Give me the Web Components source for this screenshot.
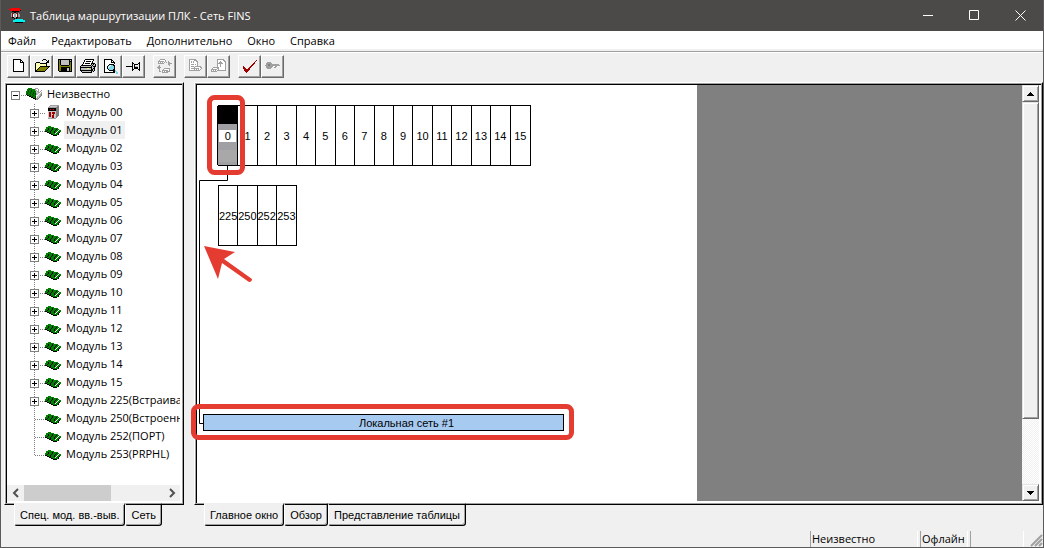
<!DOCTYPE html>
<html lang="ru">
<head>
<meta charset="utf-8">
<title>Таблица маршрутизации ПЛК - Сеть FINS</title>
<style>
  html, body { margin: 0; height: 100%; }
  body { font: 11px/18px "Open Sans", "Noto Sans", sans-serif; color: #000; background: #f0f0f0; }
</style>
</head>
<body>
<app-window></app-window>
<script>
const define = (name, html, setup) => {
  const template = document.createElement('template');
  template.innerHTML = html;
  customElements.define(name, class extends HTMLElement {
    connectedCallback() {
      if (this.shadowRoot) return;
      this.attachShadow({ mode: 'open' }).append(template.content.cloneNode(true));
      if (setup) setup(this, this.shadowRoot);
    }
  });
};

/* Pixel icons: one character for each pixel */
const PALETTE = { '#': '#000', O: '#808000', W: '#fff', Y: '#ffff66', L: '#c0c0c0', G: '#a0a0a0', D: '#808080', C: '#7ed6e6', R: '#a00000', E: '#f00', B: '#00f0f0', g: '#008000', K: '#003c00', M: '#c8c8c8' };
const ICONS = {
  app: ['..EEEEEEEEE.....','EEEEEEEEEEEE....','.EEEEEEEEEE#....','...#######......','.....##.........','..GR.GG.RG......','..GRWGGWRGG.....','..GRWBGWRGG.....','..GRWGGWRGG.....','...##GG##.......','.....#.#........','......BBBBBBBB..','....BBBBBBBBBBBB','....BBBBBBBBBBBB','......########..'],
  new: ['..########......','..#WWWWWW##.....','..#WWWWWW#W#....','..#WWWWWW####...','..#WWWWWWWWW#...','..#WWWWWWWWW#...','..#WWWWWWWWW#...','..#WWWWWWWWW#...','..#WWWWWWWWW#...','..#WWWWWWWWW#...','..#WWWWWWWWW#...','..#WWWWWWWWW#...','..###########...'],
  open: ['.........###....','........#...#.#.','.............##.','..####......###.','.#YWYW#######...','.#WYWYWYWYWY#...','.#YWYWYWYWYW#...','.#WYWY##########','.#YWY#OOOOOOOO#.','.#WY#OOOOOOOO#..','.#Y#OOOOOOOO#...','.##OOOOOOOO#....','.##########.....'],
  save: ['.##############.','.#O#LLLLLLLL#L#.','.#O#LLLLLLLL###.','.#O#LLLLLLLL#O#.','.#O#LLLLLLLL#O#.','.#O#LLLLLLLL#O#.','.#OO########OO#.','.#OOOOOOOOOOOO#.','.#OO#########O#.','.#OO######LL#O#.','.#OO######LL#O#.','.#OO######LL#O#.','..#############.'],
  print: ['.....#########..','....#WWWWWWWW#..','....#W#####W#...','...#WWWWWWWW#...','...#W#####W####.','..#WWWWWWWW#L#L#','.##########L#LL#','#LLLLLLLLLL#L###','############LL#.','#LLLLLLYYLL#L##.','#LLLLLLLLLL##L#.','#############L#.','.#LLLLLLLLL#L#..','..##########....'],
  preview: ['.########.......','.#WWWWWW##......','.#WWWWWW#W#.....','.#WWWWWW####....','.#WWWWWWWWW#....','.#WWWW#####.....','.#WWW#CWCC##....','.#WW#CWCCCC#....','.#WW#WCCCCC#....','.#WW#CCCCCC#....','.#WWW#CCCC##....','.#WWWW######C...','.#WWWWWWWW##CC..','.###########.CC.','.............CC.'],
  pin: ['................','................','................','......#......#..','......##....##..','......#.####.#..','......#.#WWW.#..','#######.#LLL.#..','......#.####.#..','......#.####.#..','......##....##..','......#......#..'],
  swap: ['...GGGGG........','..GWWWWWG.......','.GGGGGGWG..G....','.GWGWGWG.G.GG...','.GGGGGG....GGGG.','...........GG...','..G.........G...','.GG.............','GGGG............','.GG....GGGGGG...','..G...GWWWWWG...','..G..GGGGGGWG...','..GG.GWGWGGGG...','.....GGGGGG.....'],
  down: ['.GGGGGGG........','.GWWWWGGG.......','.GWGWGWWGG......','.GWGWGWWWG......','.GWWWWWWWG......','.GWGGGWGWG......','.GWWWWWWWG......','.GWGGG.GGGGGG...','.GWWW.GWWWWWGG..','.GWGGGGGGGGWWG..','.GWWWWGWGWGWG...','.GGGGGGGGGGG....'],
  up: ['......GGGGGGG...','......GWWWWWGG..','......GWWGWWWGG.','......GWGGGWWWG.','......GGGGGGWWG.','......GWWGWWWWG.','......GWWGWWWWG.','......GWWGWWWWG.','..GGGGGGWWWWWWG.','.GWWWWGGWWWWWWG.','GGGGGGWGWWWWWWG.','GWGWGWGGGGGGGGG.','GGGGGG..........'],
  check: ['................','..............R.','.............R..','............R...','...........RR...','..........RR....','.........RR.....','.R......RR......','.RR....RR.......','.RRR..RR........','..RRRRRR........','..RRRRR.........','...RRR..........','....R...........'],
  key: ['................','................','................','..GGGG..........','.GGGGGG.........','.GGDDGGGGGGGGG..','GGGDDGGGGGGGGGG.','.GGGGGGGWWGGWW..','.GGGGGG..GG.....','..GGGG..........'],
  unit: ['................','................','..gggg...GGG....','.ggKgggggGWWG...','.gKggKgggGGWG..G','ggKggKggKgMGG.GW','gKggKggKggMMGGWG','gKggKggKgKGMMWMG','KggKggKggKGMWMGD','.##gKggKggWWMMGD','...##gKggKWMMGD.','.....##ggKWGMD..','.......##KGGD...','.........#GD....'],
  cpu: ['................','.....GGGGGGGGG..','....GMMMMMMMDD..','...GGGGGGGGDDD..','...########DDD..','...##E##E##DDD..','...########DDD..','...MMMMMMMMDDD..','...MRRMRRRMDDD..','...MRRMRRRMDDD..','...MRRMMRMMDDD..','...MRRMRRMMDDD..','...MRRMRRMMDD...','...MMMMRRMMD....','...GGGGGGGG.....'],
  board: ['................','................','................','................','...ggg..........','.gggggggg.......','.gg#ggg#ggggg...','ggg#ggg#ggg#gg..','gg#ggg#ggg#ggWgg','##ggg#ggg#ggWggg','..##g#ggg#gWgg#W','....##ggggWgg#W.','......##ggggg#..','........####....']
};
customElements.define('pixel-icon', class extends HTMLElement {
  connectedCallback() {
    if (this.shadowRoot) return;
    let rects = '';
    ICONS[this.getAttribute('name')].forEach((row, y) => {
      for (let x = 0; x < row.length; x++) {
        if (row[x] === '.') continue;
        let end = x;
        while (row[end + 1] === row[x]) end++;
        rects += `<rect x="${x}" y="${y}" width="${end - x + 1}" height="1" fill="${PALETTE[row[x]]}"/>`;
        x = end;
      }
    });
    this.attachShadow({ mode: 'open' }).innerHTML =
      `<style>:host{display:block;width:16px;height:16px;flex:none}svg{display:block}</style>
       <svg width="16" height="16" viewBox="0 0 16 16" shape-rendering="crispEdges" aria-hidden="true">${rects}</svg>`;
  }
});

define('title-bar', `
<style>
  :host { display: flex; align-items: center; height: 31px; flex: none; background: #4c4a48; color: #fff; padding-left: 8px; }
  h1 { flex: 1; margin: 0 0 0 5px; font-size: 11px; font-weight: 400; }
  button { width: 46px; height: 31px; padding: 0; border: 0; background: none; display: grid; place-items: center; }
  svg { display: block; fill: none; stroke: #fff; }
</style>
<pixel-icon name="app"></pixel-icon>
<h1><slot></slot></h1>
<button aria-label="Свернуть"><svg width="11" height="11"><path d="M0 5.5h10"/></svg></button>
<button aria-label="Развернуть"><svg width="11" height="11"><path d="M.5.5h9v9h-9z"/></svg></button>
<button aria-label="Закрыть"><svg width="11" height="11"><path d="M.5.5l10 10M10.500.5l-10 10"/></svg></button>`);

define('menu-bar', `
<style>
  :host { display: flex; gap: 15px; height: 18px; flex: none; padding: 0 7px; background: #fff; border-bottom: 2px solid #f0f0f0; }
</style><slot></slot>`);
define('menu-item', `
<style>
  :host { display: block; }
  button { display: block; border: 0; padding: 0; background: none; font: inherit; font-size: 11px; line-height: 20px; color: #000; }
</style><button><slot></slot></button>`);

define('tool-bar', `
<style>
  :host { display: flex; gap: 8px; flex: none; height: 24px; padding: 3px 6px; border-top: 1px solid #a0a0a0; box-shadow: inset 0 1px #fff; }
</style><slot></slot>`);
define('tool-group', `<style>:host { display: flex; }</style><slot></slot>`);
define('tool-button', `
<style>
  :host { display: block; }
  button { box-sizing: border-box; display: block; width: 23px; height: 23px; padding: 3px 2px 2px 3px; border: 1px solid; border-color: #fff #696969 #696969 #fff; background: #f0f0f0; box-shadow: inset -1px -1px #a0a0a0; }
</style><button></button>`, (host, root) => {
  const button = root.querySelector('button');
  button.setAttribute('aria-label', host.getAttribute('label'));
  button.disabled = host.hasAttribute('disabled');
  button.innerHTML = `<pixel-icon name="${host.getAttribute('icon')}"></pixel-icon>`;
});

define('sunken-pane', `
<style>
  :host { display: flex; flex-direction: column; min-width: 0; }
  .edge { flex: 1; min-height: 0; display: flex; border: 1px solid; border-color: #fff #000 #000 #fff; }
  .mid { flex: 1; min-width: 0; display: flex; border: 1px solid #a0a0a0; }
  .in { flex: 1; min-width: 0; display: flex; background: #fff; border: solid #000; border-width: 1px 0 0 1px; }
  .body { flex: 1; min-width: 0; display: flex; border: solid #fff; border-width: 0 2px 2px 0; }
  .tabs { display: flex; flex: none; height: 25px; margin-top: -2px; padding-left: 10px; }
</style>
<div class="edge"><div class="mid"><div class="in"><div class="body"><slot></slot></div></div></div></div>
<div class="tabs" role="tablist"><slot name="tab"></slot></div>`);

define('sheet-tab', `
<style>
  :host { display: block; position: relative; }
  button { box-sizing: border-box; height: 23px; padding: 0 5px; border: solid; border-width: 2px 1px 1px; border-color: transparent #000 #000 #fff; border-radius: 0 0 3px 3px; background: #f0f0f0 padding-box; box-shadow: inset -1px -1px #a0a0a0; font: 11px/18px "Liberation Sans", Arial, sans-serif; color: #000; white-space: nowrap; }
  :host([selected]) button { border-top-color: #f0f0f0; }
</style><button role="tab"><slot></slot></button>`);

define('module-tree', `
<style>
  :host { flex: 1; min-width: 0; display: flex; flex-direction: column; }
  .view { flex: 1; min-height: 0; overflow: hidden; }
  .bar { flex: none; display: flex; align-items: stretch; height: 16px; background: #f0f0f0; }
  .bar button { width: 17px; padding: 0; border: 0; background: none; display: grid; place-items: center; }
  .bar svg { fill: none; stroke: #505050; stroke-width: 2; }
  .thumb { flex: 86; background: #cdcdcd; }
  .rest { flex: 52; }
</style>
<div class="view" role="tree"><slot></slot></div>
<div class="bar">
  <button aria-label="Влево"><svg width="8" height="10"><path d="M6 1L2 5l4 4"/></svg></button>
  <div class="thumb"></div><div class="rest"></div>
  <button aria-label="Вправо"><svg width="8" height="10"><path d="M2 1l4 4-4 4"/></svg></button>
</div>`);

define('tree-node', `
<style>
  :host { display: block; }
  .row { display: flex; align-items: center; height: 18px; padding-left: 4px; }
  :host([slot=child]) .row { padding-left: 23px; }
  button { box-sizing: border-box; flex: none; width: 9px; height: 9px; margin: 2px 0 0; padding: 0; border: 1px solid #808080; background: #fff; display: block; }
  button svg { display: block; shape-rendering: crispEdges; }
  .dots { flex: none; width: 6px; height: 1px; margin-top: 2px; background: repeating-linear-gradient(90deg, transparent 0 1px, #808080 1px 2px); }
  :host([leaf]) button { display: none; }
  :host([leaf]) .dots { width: 11px; margin-left: 4px; }
  .icon { flex: none; margin-right: 3px; }
  .label { padding: 0 2px; white-space: nowrap; }
  :host([current]) .label { background: #f0f0f0; }
  .children { background: repeating-linear-gradient(transparent 0 1px, #808080 1px 2px) 27px 0 / 1px calc(100% - 8px) no-repeat; }
</style>
<div class="row" role="treeitem"><button aria-label="Раскрыть"></button><span class="dots"></span><span class="icon"></span><span class="label"></span></div>
<div class="children" role="group"><slot name="child"></slot></div>`, (host, root) => {
  root.querySelector('.label').textContent = host.getAttribute('label');
  root.querySelector('.icon').innerHTML = `<pixel-icon name="${host.getAttribute('icon') || 'board'}"></pixel-icon>`;
  root.querySelector('button').innerHTML =
    `<svg width="7" height="7"><path fill="#000" d="M1 3h5v1H1z${host.hasAttribute('open') ? '' : 'M3 1h1v5H3z'}"/></svg>`;
});

define('module-rack', `
<style>
  :host { display: block; position: absolute; font: 11px/16px "Liberation Sans", Arial, sans-serif; }
  .cells { display: grid; grid-auto-flow: column; grid-auto-columns: 1fr; height: 59px; border: 1px solid #000; }
  .cell { display: flex; align-items: center; justify-content: center; min-width: 0; overflow: hidden; border-right: 1px solid #000; }
  .cell:last-child { border-right: 0; }
  .cell.on { margin-left: -2px; border-left: 1px solid #000; background: linear-gradient(#000 0 18px, #a0a0a4 18px 44px, #a8a8a8 44px 56px, #a0a0a4 56px); }
  .on span { background: #fff; width: 17px; line-height: 12px; text-align: center; }
</style><div class="cells"></div>`, (host, root) => {
  root.querySelector('.cells').innerHTML = host.getAttribute('units').split(' ')
    .map(n => `<div class="cell${n === host.getAttribute('active') ? ' on' : ''}"><span>${n}</span></div>`).join('');
});

define('network-canvas', `
<style>
  :host { flex: 1; min-width: 0; display: flex; background: #808080; }
  .sheet { position: relative; width: 500px; background: #fff; }
  .fill { flex: 1; }
  .main { left: 21px; top: 20px; width: 313px; }
  .extra { left: 21px; top: 100px; width: 79px; }
  .net { position: absolute; left: 6px; top: 329px; box-sizing: border-box; width: 361px; height: 17px; border: 1px solid #000; background: #a6caf0; font: 11px/17px "Liberation Sans", Arial, sans-serif; text-align: center; padding-left: 46px; }
  .wires { position: absolute; left: 0; top: 0; pointer-events: none; overflow: visible; }
  .scroll { width: 17px; flex: none; display: flex; flex-direction: column; background: repeating-conic-gradient(#fff 0 25%, #f0f0f0 0 50%) 0 0 / 2px 2px; }
  .scroll button, .thumb { box-sizing: border-box; width: 17px; padding: 0; border: 1px solid; border-color: #e3e3e3 #696969 #696969 #e3e3e3; background: #f0f0f0; box-shadow: inset 1px 1px #fff, inset -1px -1px #a0a0a0; }
  .scroll button { height: 17px; flex: none; display: grid; place-items: center; }
  .thumb { flex: 316; }
  .track { flex: 65; }
</style>
<div class="sheet">
  <module-rack class="main" units="0 1 2 3 4 5 6 7 8 9 10 11 12 13 14 15" active="0"></module-rack>
  <module-rack class="extra" units="225 250 252 253"></module-rack>
  <div class="net">Локальная сеть #1</div>
  <svg class="wires" width="500" height="415" aria-hidden="true">
    <path d="M30.500 81v14.500H2.500V338.500H6" fill="none" stroke="#000"/>
    <g fill="none" stroke="#e53c31" stroke-width="5">
      <rect x="12.500" y="12.500" width="33" height="75" rx="5"/>
      <rect x="-3.500" y="321.500" width="378" height="31" rx="5"/>
    </g>
    <path d="M7 161l31 6-11 7 28 20q0 3-3 3L25 178l-4 16z" fill="#e53c31"/>
  </svg>
</div>
<div class="fill"></div>
<div class="scroll">
  <button aria-label="Вверх"><svg width="7" height="4" shape-rendering="crispEdges"><path d="M3 0h1v1h1v1h1v1h1v1H0V3h1V2h1V1h1z"/></svg></button>
  <div class="thumb"></div><div class="track"></div>
  <button aria-label="Вниз"><svg width="7" height="4" shape-rendering="crispEdges"><path d="M0 0h7v1H6v1H5v1H4v1H3V3H2V2H1V1H0z"/></svg></button>
</div>`);

define('status-bar', `
<style>
  :host { display: flex; justify-content: flex-end; flex: none; height: 16px; margin-top: 3px; }
  span { box-sizing: border-box; height: 16px; line-height: 16px; border: solid #a0a0a0; border-width: 0 1px; border-right-color: #fff; padding-left: 1px; white-space: nowrap; }
  .plc { width: 108px; margin-right: 2px; }
  .mode { width: 48px; margin-right: 2px; }
  .spare { width: 54px; }
  svg { display: block; width: 19px; height: 16px; stroke: #a0a0a0; }
</style>
<span class="plc"><slot name="plc"></slot></span><span class="mode"><slot name="mode"></slot></span><span class="spare"></span>
<svg aria-hidden="true"><path stroke-width="2" d="M7 15L18 4M11 15l7-7M15 15l3-3"/></svg>`);

define('app-window', `
<style>
  :host { box-sizing: border-box; display: flex; flex-direction: column; height: 100vh; border: 1px solid #5a5a5a; border-top: 0; background: #f0f0f0; }
  main { flex: 1; min-height: 0; display: flex; gap: 10px; padding-left: 3px; }
  .left { width: 180px; flex: none; }
  .right { flex: 1; }
</style>
<title-bar>Таблица маршрутизации ПЛК - Сеть FINS</title-bar>
<menu-bar><menu-item>Файл</menu-item><menu-item>Редактировать</menu-item><menu-item>Дополнительно</menu-item><menu-item>Окно</menu-item><menu-item>Справка</menu-item></menu-bar>
<tool-bar>
  <tool-group>
    <tool-button icon="new" label="Создать"></tool-button><tool-button icon="open" label="Открыть"></tool-button><tool-button icon="save" label="Сохранить"></tool-button><tool-button icon="print" label="Печать"></tool-button><tool-button icon="preview" label="Просмотр"></tool-button><tool-button icon="pin" label="Закрепить"></tool-button>
  </tool-group>
  <tool-group><tool-button icon="swap" label="Обмен" disabled></tool-button></tool-group>
  <tool-group><tool-button icon="down" label="Загрузить" disabled></tool-button><tool-button icon="up" label="Выгрузить" disabled></tool-button></tool-group>
  <tool-group><tool-button icon="check" label="Проверить"></tool-button><tool-button icon="key" label="Ключ" disabled></tool-button></tool-group>
</tool-bar>
<main>
  <sunken-pane class="left">
    <module-tree><tree-node class="root" label="Неизвестно" icon="unit" open></tree-node></module-tree>
    <sheet-tab slot="tab" selected>Спец. мод. вв.-выв.</sheet-tab><sheet-tab slot="tab">Сеть</sheet-tab>
  </sunken-pane>
  <sunken-pane class="right">
    <network-canvas></network-canvas>
    <sheet-tab slot="tab" selected>Главное окно</sheet-tab><sheet-tab slot="tab">Обзор</sheet-tab><sheet-tab slot="tab">Представление таблицы</sheet-tab>
  </sunken-pane>
</main>
<status-bar><div slot="plc">Неизвестно</div><div slot="mode">Офлайн</div></status-bar>`, (host, root) => {
  const tree = root.querySelector('.root');
  const add = (label, attrs = {}) => {
    const node = document.createElement('tree-node');
    node.slot = 'child';
    node.setAttribute('label', label);
    for (const key in attrs) node.setAttribute(key, attrs[key]);
    tree.append(node);
  };
  for (let i = 0; i < 16; i++) add('Модуль ' + String(i).padStart(2, '0'), i === 0 ? { icon: 'cpu' } : i === 1 ? { current: '' } : {});
  add('Модуль 225(Встраиваемый)');
  add('Модуль 250(Встроенный)', { leaf: '' });
  add('Модуль 252(ПОРТ)', { leaf: '' });
  add('Модуль 253(PRPHL)', { leaf: '' });
});
</script>
</body>
</html>
